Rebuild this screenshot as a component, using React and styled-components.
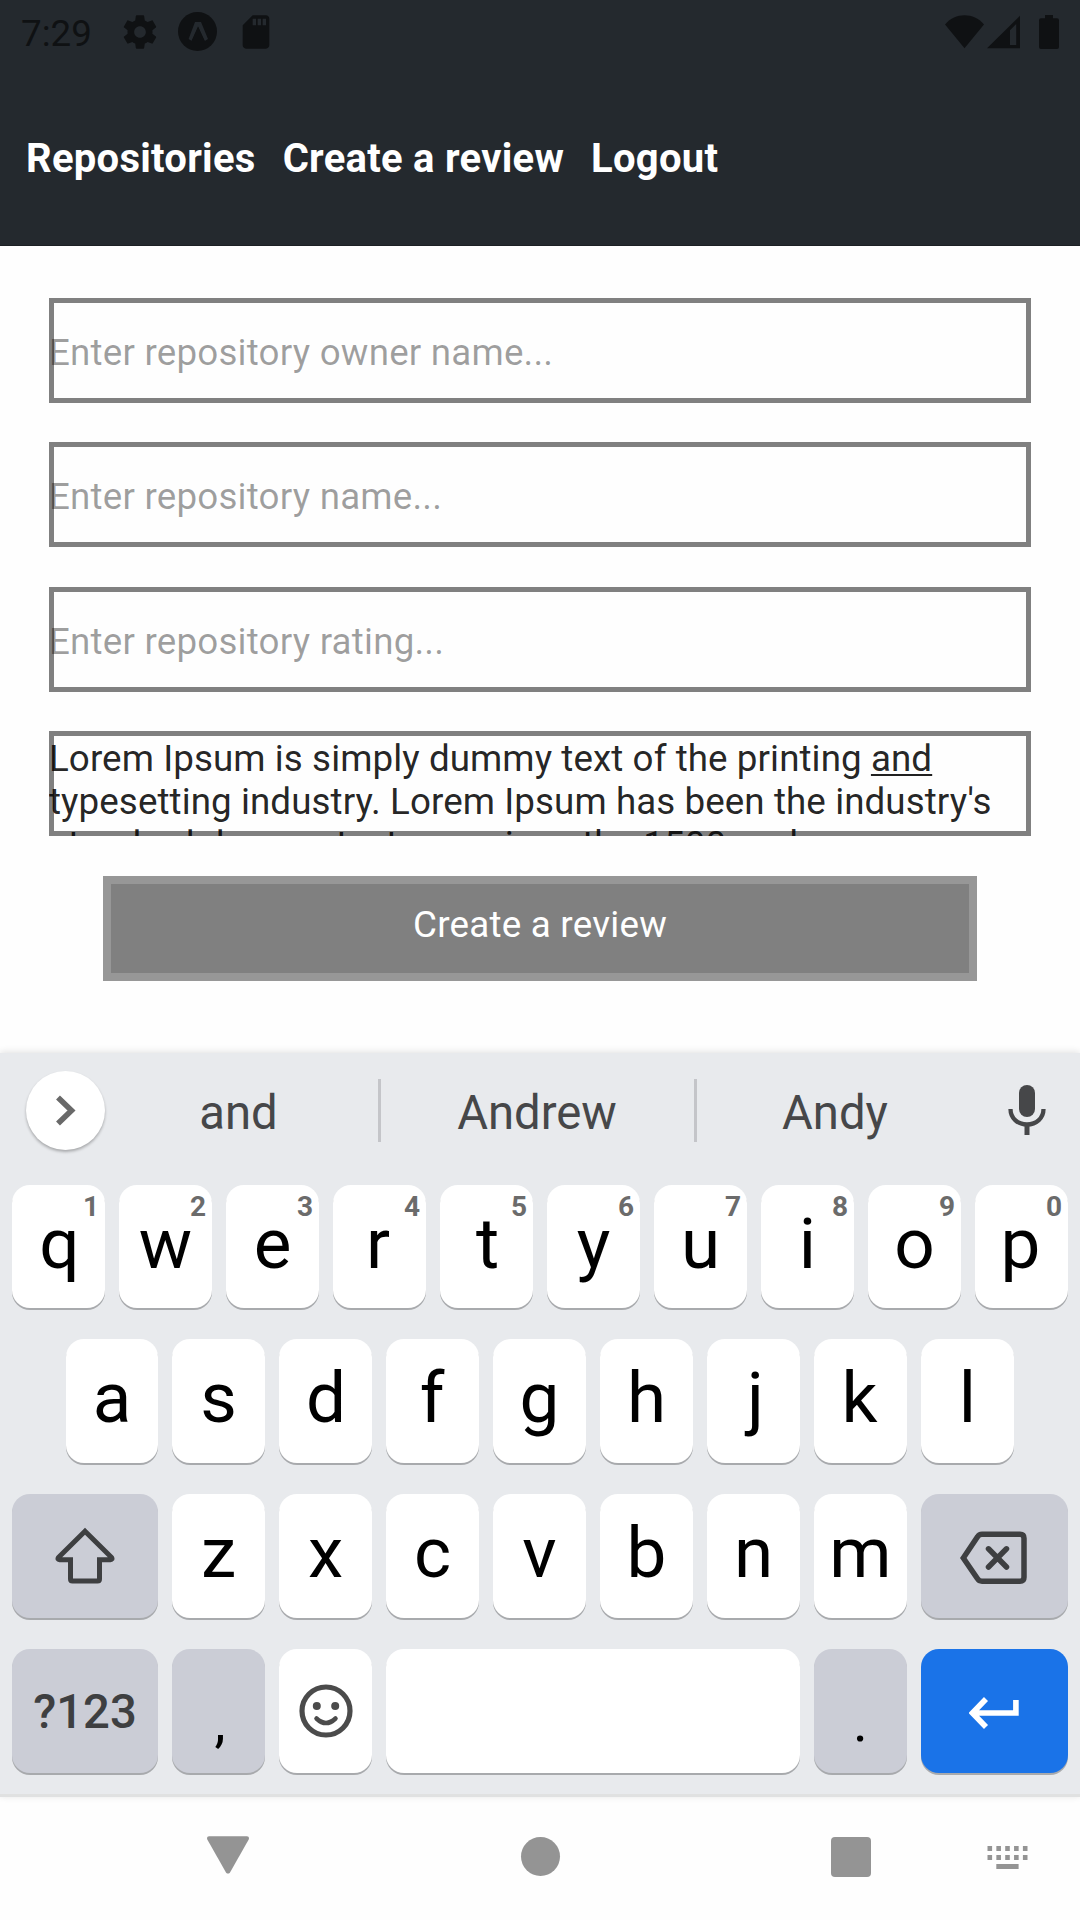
import React from "react";
import styled, { createGlobalStyle } from "styled-components";

const GlobalStyle = createGlobalStyle`
  * { box-sizing: border-box; }
  body { margin: 0; background: #fefefe; font-family: Roboto, "Noto Sans", sans-serif; }
`;

const Screen = styled.div`
  width: 1080px;
  height: 1920px;
  display: flex;
  flex-direction: column;
  background: #fefefe;
  overflow: hidden;
`;

const Header = styled.header`
  height: 246px;
  flex: none;
  background: #24292e;
  border-bottom: 1px solid #1c2024;
`;

const StatusBar = styled.div`
  height: 63px;
  padding: 0 21px;
  display: flex;
  align-items: center;
  justify-content: space-between;
  color: #0f1113;
`;

const StatusGroup = styled.div`
  display: flex;
  align-items: center;
  svg { display: block; }
`;

const Clock = styled.span`
  font-size: 36.75px;
  line-height: 43px;
  width: 99px;
  padding-top: 4px;
`;

const Spacer = styled.span`
  width: ${(p) => p.$w}px;
`;

const Tabs = styled.nav`
  display: flex;
  gap: 27px;
  padding: 73px 0 0 26px;
`;

const Tab = styled.span`
  color: #fff;
  font-weight: 700;
  font-size: 40px;
  letter-spacing: 0.27px;
  line-height: 46px;
  white-space: nowrap;
`;

const Form = styled.main`
  height: 807px;
  flex: none;
  padding: 52px 49px 0;
  display: flex;
  flex-direction: column;
  align-items: stretch;
  gap: 39.4px;
`;

const fieldBox = `
  display: block;
  width: 100%;
  height: 105px;
  flex: none;
  margin: 0;
  border: 0;
  background: transparent;
  box-shadow: inset 0 0 0 5px #808080;
  font-family: inherit;
  font-size: 36.75px;
`;

const Field = styled.input`
  ${fieldBox}
  padding: 4px 0 0;
  letter-spacing: 0.2px;
  color: rgba(0, 0, 0, 0.87);
  &::placeholder { color: rgba(0, 0, 0, 0.38); opacity: 1; }
`;

const ReviewField = styled.div`
  ${fieldBox}
  padding-top: 6px;
  line-height: 43px;
  letter-spacing: 0.08px;
  white-space: nowrap;
  color: rgba(0, 0, 0, 0.87);
  overflow: hidden;
`;

const ComposingWord = styled.span`
  text-decoration: underline;
  text-decoration-thickness: 2px;
  text-underline-offset: 3px;
  text-decoration-skip-ink: none;
`;

const SubmitButton = styled.button`
  height: 105px;
  flex: none;
  margin: 0 54px;
  padding: 0 0 7px;
  border: 8px solid #979797;
  background: #808080;
  color: #fff;
  font-family: inherit;
  font-size: 36.75px;
  letter-spacing: 0.24px;
`;

const Keyboard = styled.section`
  height: 744px;
  flex: none;
  padding: 0 12px;
  display: flex;
  flex-direction: column;
  background: #e8eaed;
  border-bottom: 3px solid #e0e1e1;
  box-shadow: 0 -1px 7px rgba(0, 0, 0, 0.12);
`;

const SuggestionBar = styled.div`
  height: 132px;
  flex: none;
  display: flex;
  align-items: flex-start;
  padding: 18px 0 0 14px;
`;

const ExpandButton = styled.div`
  width: 79px;
  height: 79px;
  flex: none;
  border-radius: 50%;
  background: #fff;
  box-shadow: 0 2px 3px rgba(0, 0, 0, 0.28);
  display: flex;
  align-items: center;
  justify-content: center;
`;

const Suggestion = styled.div`
  width: ${(p) => p.$w}px;
  height: 63px;
  margin-top: 8px;
  padding-top: 4px;
  flex: none;
  border-right: ${(p) => (p.$last ? 0 : 3)}px solid #c4c5c9;
  display: flex;
  align-items: center;
  justify-content: center;
  padding-right: ${(p) => p.$shift || 0}px;
  color: #464749;
  font-size: 47.25px;
  line-height: 56px;
`;

const MicSlot = styled.div`
  flex: 1;
  height: 80px;
  padding: 14px 0 0 23px;
`;

const KeyRow = styled.div`
  display: flex;
  gap: 14px;
  height: ${(p) => p.$h || 124}px;
  flex: none;
  margin-bottom: 31px;
  padding: 0 ${(p) => p.$inset || 0}px;
`;

const tones = {
  light: ["#fff", "#000"],
  gray: ["#cbcdd6", "#3e3f41"],
  blue: ["#1a73e8", "#fff"],
};

const KeyCap = styled.div`
  position: relative;
  flex: ${(p) => (p.$w ? `0 0 ${p.$w}px` : "1 1 0")};
  min-width: 0;
  padding: ${(p) => p.$pad || 0};
  border-radius: 18px;
  background: ${(p) => tones[p.$tone][0]};
  color: ${(p) => tones[p.$tone][1]};
  box-shadow: 0 2px 0 #a8aaad;
  display: flex;
  align-items: center;
  justify-content: center;
  svg { display: block; }
`;

const Letter = styled.span`
  font-size: 71px;
  line-height: 84px;
  padding-bottom: 6px;
  margin-left: ${(p) => p.$nudge * 2}px;
`;

const Hint = styled.span`
  position: absolute;
  top: 5px;
  right: 6px;
  font-size: 28px;
  line-height: 33px;
  font-weight: 700;
  color: #6b6b6b;
`;

const Punctuation = styled.span`
  font-size: 56px;
  line-height: 66px;
  padding: 22px 0 0 ${(p) => p.$indent || 0}px;
  color: #000;
`;

const SymbolsLabel = styled.span`
  font-size: 47.25px;
  line-height: 56px;
  padding-top: 2px;
  font-weight: 500;
`;

const NavBar = styled.footer`
  flex: 1;
  display: flex;
  align-items: flex-start;
  padding: 39px 51px 0 207px;
  color: #949494;
  svg { display: block; }
`;

const HomeDot = styled.span`
  width: 39px;
  height: 39px;
  margin: 1px 271.500px 0 271.500px;
  border-radius: 50%;
  background: currentColor;
`;

const RecentsSquare = styled.span`
  width: 40px;
  height: 40px;
  margin: 1px 116px 0 0;
  border-radius: 4px;
  background: currentColor;
`;

const Gear = () => (
  <svg width="40" height="40" viewBox="0 0 24 24" fill="currentColor">
    <path d="M19.43 12.98c.04-.32.07-.64.07-.98s-.03-.66-.07-.98l2.11-1.65c.19-.15.24-.42.12-.64l-2-3.46c-.12-.22-.39-.3-.61-.22l-2.49 1c-.52-.4-1.08-.73-1.69-.98l-.38-2.65C14.46 2.18 14.25 2 14 2h-4c-.25 0-.46.18-.49.42l-.38 2.65c-.61.25-1.17.59-1.69.98l-2.49-1c-.23-.09-.49 0-.61.22l-2 3.46c-.13.22-.07.49.12.64l2.11 1.65c-.04.32-.07.65-.07.98s.03.66.07.98l-2.11 1.65c-.19.15-.24.42-.12.64l2 3.46c.12.22.39.3.61.22l2.49-1c.52.4 1.08.73 1.69.98l.38 2.65c.03.24.24.42.49.42h4c.25 0 .46-.18.49-.42l.38-2.65c.61-.25 1.17-.59 1.69-.98l2.49 1c.23.09.49 0 .61-.22l2-3.46c.12-.22.07-.49-.12-.64l-2.11-1.65zM12 15.5c-1.93 0-3.5-1.57-3.5-3.5s1.57-3.5 3.5-3.5 3.5 1.57 3.5 3.5-1.57 3.5-3.5 3.5z" />
  </svg>
);

const ExpoBadge = () => (
  <svg width="39" height="39" viewBox="0 0 39 39">
    <circle cx="19.5" cy="19.5" r="19.5" fill="currentColor" />
    <path d="M17 10h6l7 17-3.2 2L20.2 15 13.8 29 10.6 27z" fill="#24292e" />
    <path d="M20 14.5 26.5 29H13.5z" fill="currentColor" />
  </svg>
);

const SdCard = () => (
  <svg width="40" height="40" viewBox="0 0 24 24" fill="currentColor">
    <path d="M18 2h-8L4.02 8 4 20c0 1.1.9 2 2 2h12c1.1 0 2-.9 2-2V4c0-1.1-.9-2-2-2zm-6 6h-2V4h2v4zm3 0h-2V4h2v4zm3 0h-2V4h2v4z" />
  </svg>
);

const Wifi = () => (
  <svg width="39" height="34" viewBox="0 0 39 34" fill="currentColor">
    <path d="M0 9.5C5.5 3 12 .3 19.5.3S33.5 3 39 9.5L19.5 33.2z" />
  </svg>
);

const Signal = () => (
  <svg width="33" height="34" viewBox="0 0 33 34" fill="currentColor" fillRule="evenodd">
    <path d="M33 .8V33.3H0zM29.2 9 23 15.2V30h6.2z" />
  </svg>
);

const Battery = () => (
  <svg width="20" height="34" viewBox="0 0 20 34" fill="currentColor">
    <path d="M6 0h8v3.3h4a2 2 0 0 1 2 2V32a2 2 0 0 1-2 2H2a2 2 0 0 1-2-2V5.3a2 2 0 0 1 2-2h4z" />
  </svg>
);

const Chevron = () => (
  <svg width="22" height="34" viewBox="0 0 22 34" fill="none">
    <path d="M3 3.5 16.5 16.5 3 29.5" stroke="#696969" strokeWidth="5.6" />
  </svg>
);

const Mic = () => (
  <svg width="38" height="52" viewBox="0 0 38 52" fill="none">
    <rect x="11" y="0" width="16" height="32" rx="8" fill="#464749" />
    <path d="M2.5 24c0 9 7 15.5 16.5 15.5S35.5 33 35.5 24" stroke="#464749" strokeWidth="4.3" />
    <path d="M19 39v11" stroke="#464749" strokeWidth="5" />
  </svg>
);

const Shift = () => (
  <svg width="60" height="58" viewBox="0 0 60 58" fill="none" stroke="currentColor" strokeWidth="5">
    <path d="M30 4.2 3.4 30.6q-1.2 2 1.2 2.2H15.5V52q0 2 2 2h25q2 0 2-2V32.8H55.400q2.400-.2 1.200-2.200z" />
  </svg>
);

const Backspace = () => (
  <svg width="67" height="54" viewBox="0 0 67 54" fill="none" stroke="currentColor" strokeWidth="5.5">
    <path d="M3.3 27 17.5 5.8Q19 3.3 22 3.3H60q4 0 4 4V46.2q0 4-4 4H22q-3 0-4.5-2.5z" />
    <path d="M28.5 17.8 46.5 36M46.5 17.8 28.5 36" strokeLinecap="round" />
  </svg>
);

const Smiley = () => (
  <svg width="54" height="54" viewBox="0 0 54 54" fill="none" stroke="#4b4b4b">
    <circle cx="27" cy="27" r="24" strokeWidth="5.2" />
    <circle cx="17.8" cy="22" r="4" fill="#4b4b4b" stroke="none" />
    <circle cx="36.2" cy="22" r="4" fill="#4b4b4b" stroke="none" />
    <path d="M17.5 34.5q9.5 9 19 0" strokeWidth="4.5" strokeLinecap="round" />
  </svg>
);

const Enter = () => (
  <svg width="50" height="32" viewBox="0 0 50 32" fill="none" stroke="currentColor" strokeWidth="5.6">
    <path d="M17 2 3.5 16 17 30M4 16H46.9V3" />
  </svg>
);

const BackTriangle = () => (
  <svg width="42" height="38" viewBox="0 0 42 38" fill="currentColor">
    <path d="M2 .2h38q2.8.6 1.7 3.2L23 36.4q-2 2.4-4 0L.3 3.4Q-.8.8 2 .2z" />
  </svg>
);

const KeyboardGlyph = () => (
  <svg width="41" height="34" viewBox="0 0 41 34" fill="currentColor">
    {[0, 1, 2, 3, 4].map((i) => (
      <g key={i}>
        <rect x={0.5 + i * 8.85} y="10" width="4.6" height="5" />
        <rect x={0.5 + i * 8.85} y="19" width="4.6" height="5" />
      </g>
    ))}
    <rect x="9.3" y="28" width="22.3" height="5" />
  </svg>
);

// Centres each glyph by its ink rather than by its advance width.
const opticalNudge = { q: 1, r: -1.5, t: 1, p: -1, d: 0.5, f: -0.5, j: 2, k: -1 };

const LetterKeys = ({ letters, hints, firstWidth }) =>
  letters.split("").map((letter, i) => (
    <KeyCap key={letter} $tone="light" $w={i === 0 ? firstWidth : undefined}>
      {hints && <Hint>{hints[i]}</Hint>}
      <Letter $nudge={opticalNudge[letter] || 0}>{letter}</Letter>
    </KeyCap>
  ));

export default function App() {
  return (
    <Screen>
      <GlobalStyle />
      <Header>
        <StatusBar>
          <StatusGroup>
            <Clock>7:29</Clock>
            <Gear />
            <Spacer $w={18} />
            <ExpoBadge />
            <Spacer $w={19} />
            <SdCard />
          </StatusGroup>
          <StatusGroup>
            <Wifi />
            <Spacer $w={3} />
            <Signal />
            <Spacer $w={19} />
            <Battery />
          </StatusGroup>
        </StatusBar>
        <Tabs>
          <Tab>Repositories</Tab>
          <Tab>Create a review</Tab>
          <Tab>Logout</Tab>
        </Tabs>
      </Header>
      <Form>
        <Field placeholder="Enter repository owner name..." />
        <Field placeholder="Enter repository name..." />
        <Field placeholder="Enter repository rating..." />
        <ReviewField>
          Lorem Ipsum is simply dummy text of the printing <ComposingWord>and</ComposingWord>
          <br />
          typesetting industry. Lorem Ipsum has been the industry's
          <br />
          standard dummy text ever since the 1500s, when
        </ReviewField>
        <SubmitButton>Create a review</SubmitButton>
      </Form>
      <Keyboard>
        <SuggestionBar>
          <ExpandButton>
            <Chevron />
          </ExpandButton>
          <Suggestion $w={276} $shift={6}>and</Suggestion>
          <Suggestion $w={316} $shift={1}>Andrew</Suggestion>
          <Suggestion $w={288} $shift={12} $last>Andy</Suggestion>
          <MicSlot>
            <Mic />
          </MicSlot>
        </SuggestionBar>
        <KeyRow $h={123}>
          <LetterKeys letters="qwertyuiop" hints="1234567890" />
        </KeyRow>
        <KeyRow $inset={54}>
          <LetterKeys letters="asdfghjkl" firstWidth={92} />
        </KeyRow>
        <KeyRow>
          <KeyCap $tone="gray" $w={146}>
            <Shift />
          </KeyCap>
          <LetterKeys letters="zxcvbnm" />
          <KeyCap $tone="gray" $w={147} $pad="4px 2px 0 0">
            <Backspace />
          </KeyCap>
        </KeyRow>
        <KeyRow>
          <KeyCap $tone="gray" $w={146}>
            <SymbolsLabel>?123</SymbolsLabel>
          </KeyCap>
          <KeyCap $tone="gray" $w={93}>
            <Punctuation $indent={3}>,</Punctuation>
          </KeyCap>
          <KeyCap $tone="light" $w={93}>
            <Smiley />
          </KeyCap>
          <KeyCap $tone="light" />
          <KeyCap $tone="gray" $w={93}>
            <Punctuation>.</Punctuation>
          </KeyCap>
          <KeyCap $tone="blue" $w={147} $pad="4px 2px 0 0">
            <Enter />
          </KeyCap>
        </KeyRow>
      </Keyboard>
      <NavBar>
        <BackTriangle />
        <HomeDot />
        <RecentsSquare />
        <KeyboardGlyph />
      </NavBar>
    </Screen>
  );
}
